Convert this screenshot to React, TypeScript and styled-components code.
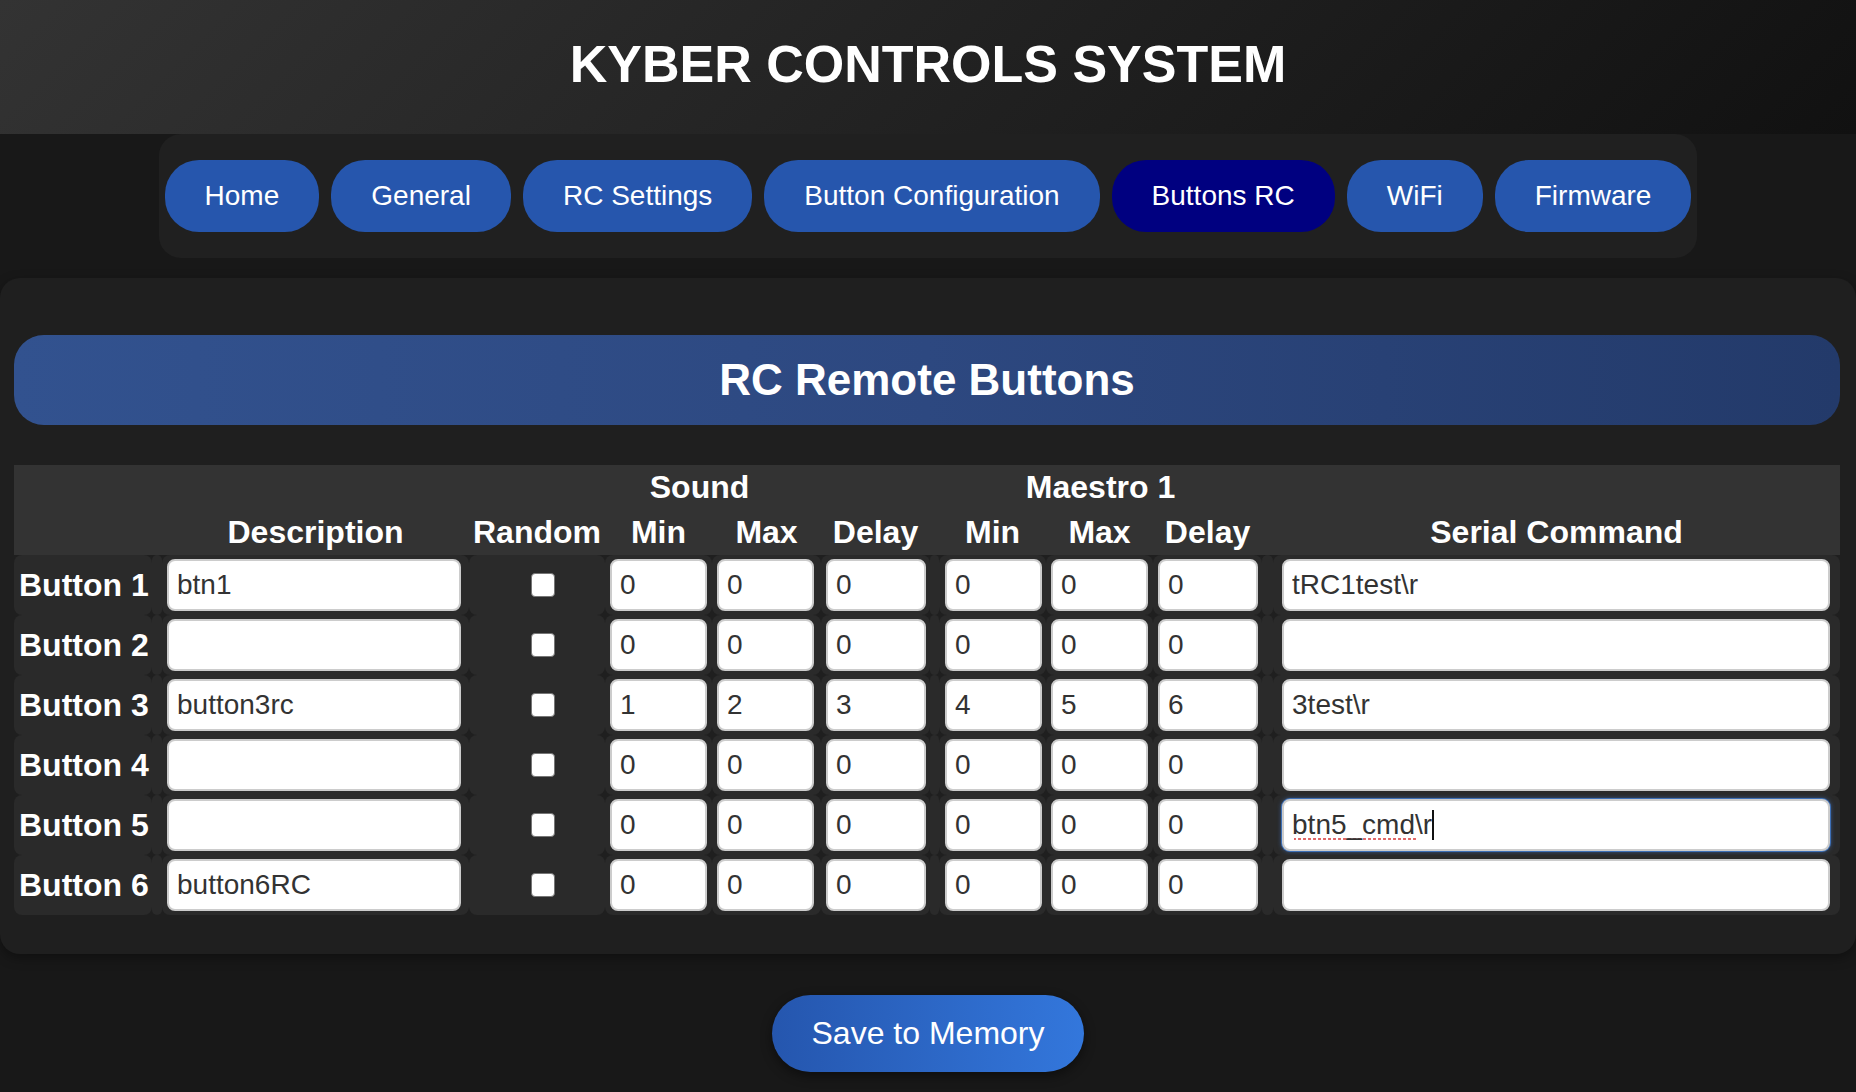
import React from "react";
import styled, { createGlobalStyle } from "styled-components";

const GlobalStyle = createGlobalStyle`
  * {
    box-sizing: border-box;
  }
  body {
    margin: 0;
    background: #181818;
    color: #fff;
    font-family: "Liberation Sans", Arial, Helvetica, sans-serif;
  }
`;

const Header = styled.header`
  height: 134px;
  display: flex;
  align-items: center;
  justify-content: center;
  padding-bottom: 6px;
  background: linear-gradient(135deg, #333 0%, #111 100%);
`;

const Title = styled.h1`
  margin: 0;
  font-size: 52px;
  font-weight: 700;
  color: #fff;
`;

const Nav = styled.nav`
  display: flex;
  gap: 12px;
  width: fit-content;
  margin: 0 auto;
  padding: 26px 6px;
  background: #202020;
  border-radius: 22px;
`;

const NavPill = styled.a<{ $active?: boolean }>`
  display: block;
  padding: 20px 40px;
  font-size: 28px;
  line-height: 32px;
  color: #fff;
  text-decoration: none;
  white-space: nowrap;
  border-radius: 34px;
  background: ${(p) => (p.$active ? "#000080" : "#2656ad")};
`;

const Panel = styled.section`
  margin-top: 20px;
  padding: 57px 16px 39px 14px;
  background: #1f1f1f;
  border-radius: 20px;
  box-shadow: 0 4px 12px rgba(0, 0, 0, 0.35);
`;

const SectionTitle = styled.h2`
  margin: 0 0 40px;
  height: 90px;
  display: flex;
  align-items: center;
  justify-content: center;
  font-size: 44px;
  font-weight: 700;
  border-radius: 30px;
  background: linear-gradient(90deg, #32528f 0%, #2d4880 50%, #233a6a 100%);
`;

const Table = styled.table`
  width: 100%;
  table-layout: fixed;
  border-collapse: separate;
  border-spacing: 0;
`;

const HeadCell = styled.th`
  height: 45px;
  padding: 0;
  background: #333;
  font-size: 32px;
  font-weight: 700;
  color: #fff;
  text-align: center;
  vertical-align: middle;
  white-space: nowrap;
`;

const Cell = styled.td<{ $padLeft?: number }>`
  height: 60px;
  padding: 0 0 0 ${(p) => p.$padLeft ?? 5}px;
  background: #2a2a2a;
  border-radius: 8px;
  vertical-align: middle;
`;

const CenterCell = styled(Cell)`
  text-align: center;
`;

const LabelCell = styled(Cell)`
  font-size: 32px;
  font-weight: 700;
  color: #fff;
  white-space: nowrap;
`;

// caret after the text, and the dotted spell-check line under "btn5_cmd" only
const focusLayers = `
  linear-gradient(#111, #111),
  linear-gradient(to right, #fff 0 10px, transparent 10px 133px, #fff 133px),
  radial-gradient(circle, #e06666 0 1.1px, transparent 1.5px)
`;

const TextField = styled.input<{ $w: number; $focused?: boolean }>`
  display: block;
  width: ${(p) => p.$w}px;
  height: 52px;
  padding: 0 8px;
  border: 2px solid #ccc;
  border-radius: 8px;
  background-color: #fff;
  color: #333;
  font-family: "Liberation Sans", Arial, sans-serif;
  font-size: 28px;
  outline: none;
  ${(p) =>
    p.$focused &&
    `
    box-shadow: 0 0 0 1px #3d6fb6, 0 0 5px rgba(70, 120, 200, 0.8);
    background-image: ${focusLayers};
    background-repeat: no-repeat, no-repeat, repeat-x;
    background-size: 2px 30px, 100% 100%, 5px 4px;
    background-position: 148px 9px, 0 0, 8px 36px;
  `}
`;

const Check = styled.input`
  appearance: none;
  display: inline-block;
  width: 24px;
  height: 24px;
  margin: 0 0 0 12px;
  vertical-align: middle;
  background: #fff;
  border: 1.5px solid #767676;
  border-radius: 4px;
`;

const Footer = styled.div`
  display: flex;
  justify-content: center;
  padding: 41px 0 20px;
`;

const SaveButton = styled.button`
  padding: 20px 40px;
  border: none;
  border-radius: 40px;
  font-family: "Liberation Sans", Arial, sans-serif;
  font-size: 32px;
  line-height: 37px;
  color: #fff;
  background: linear-gradient(90deg, #2556ae 0%, #3377dc 100%);
  box-shadow: 0 4px 12px rgba(0, 0, 0, 0.45);
  cursor: pointer;
`;

const tabs = [
  "Home",
  "General",
  "RC Settings",
  "Button Configuration",
  "Buttons RC",
  "WiFi",
  "Firmware",
];

interface IRow {
  desc: string;
  sound: string[];
  maestro: string[];
  serial: string;
}

const rows: IRow[] = [
  { desc: "btn1", sound: ["0", "0", "0"], maestro: ["0", "0", "0"], serial: "tRC1test\\r" },
  { desc: "", sound: ["0", "0", "0"], maestro: ["0", "0", "0"], serial: "" },
  { desc: "button3rc", sound: ["1", "2", "3"], maestro: ["4", "5", "6"], serial: "3test\\r" },
  { desc: "", sound: ["0", "0", "0"], maestro: ["0", "0", "0"], serial: "" },
  { desc: "", sound: ["0", "0", "0"], maestro: ["0", "0", "0"], serial: "btn5_cmd\\r" },
  { desc: "button6RC", sound: ["0", "0", "0"], maestro: ["0", "0", "0"], serial: "" },
];

// label, gap, desc, random, min, max, delay, gap, min, max, delay, gap, serial
const colWidths = [138, 10, 307, 136, 107, 109, 109, 9, 107, 107, 109, 11, 567];
const numWidths = [97, 97, 100];

const App = () => {
  return (
    <>
      <GlobalStyle />
      <Header>
        <Title>KYBER CONTROLS SYSTEM</Title>
      </Header>
      <Nav>
        {tabs.map((t) => (
          <NavPill key={t} href="#" $active={t === "Buttons RC"}>
            {t}
          </NavPill>
        ))}
      </Nav>
      <Panel>
        <SectionTitle>RC Remote Buttons</SectionTitle>
        <Table>
          <colgroup>
            {colWidths.map((w, i) => (
              <col key={i} style={{ width: w }} />
            ))}
          </colgroup>
          <thead>
            <tr>
              <HeadCell colSpan={3} />
              <HeadCell colSpan={4}>Sound</HeadCell>
              <HeadCell />
              <HeadCell colSpan={3}>Maestro 1</HeadCell>
              <HeadCell colSpan={2} />
            </tr>
            <tr>
              <HeadCell />
              <HeadCell />
              <HeadCell>Description</HeadCell>
              <HeadCell>Random</HeadCell>
              <HeadCell>Min</HeadCell>
              <HeadCell>Max</HeadCell>
              <HeadCell>Delay</HeadCell>
              <HeadCell />
              <HeadCell>Min</HeadCell>
              <HeadCell>Max</HeadCell>
              <HeadCell>Delay</HeadCell>
              <HeadCell />
              <HeadCell>Serial Command</HeadCell>
            </tr>
          </thead>
          <tbody>
            {rows.map((r, i) => (
              <tr key={i}>
                <LabelCell>Button {i + 1}</LabelCell>
                <Cell />
                <Cell>
                  <TextField $w={294} defaultValue={r.desc} />
                </Cell>
                <CenterCell $padLeft={0}>
                  <Check type="checkbox" />
                </CenterCell>
                {r.sound.map((v, j) => (
                  <Cell key={"s" + j}>
                    <TextField $w={numWidths[j]} defaultValue={v} />
                  </Cell>
                ))}
                <Cell />
                {r.maestro.map((v, j) => (
                  <Cell key={"m" + j} $padLeft={j === 0 ? 6 : 5}>
                    <TextField $w={numWidths[j]} defaultValue={v} />
                  </Cell>
                ))}
                <Cell />
                <Cell $padLeft={9}>
                  <TextField $w={548} $focused={i === 4} defaultValue={r.serial} />
                </Cell>
              </tr>
            ))}
          </tbody>
        </Table>
      </Panel>
      <Footer>
        <SaveButton>Save to Memory</SaveButton>
      </Footer>
    </>
  );
};

export default App;
